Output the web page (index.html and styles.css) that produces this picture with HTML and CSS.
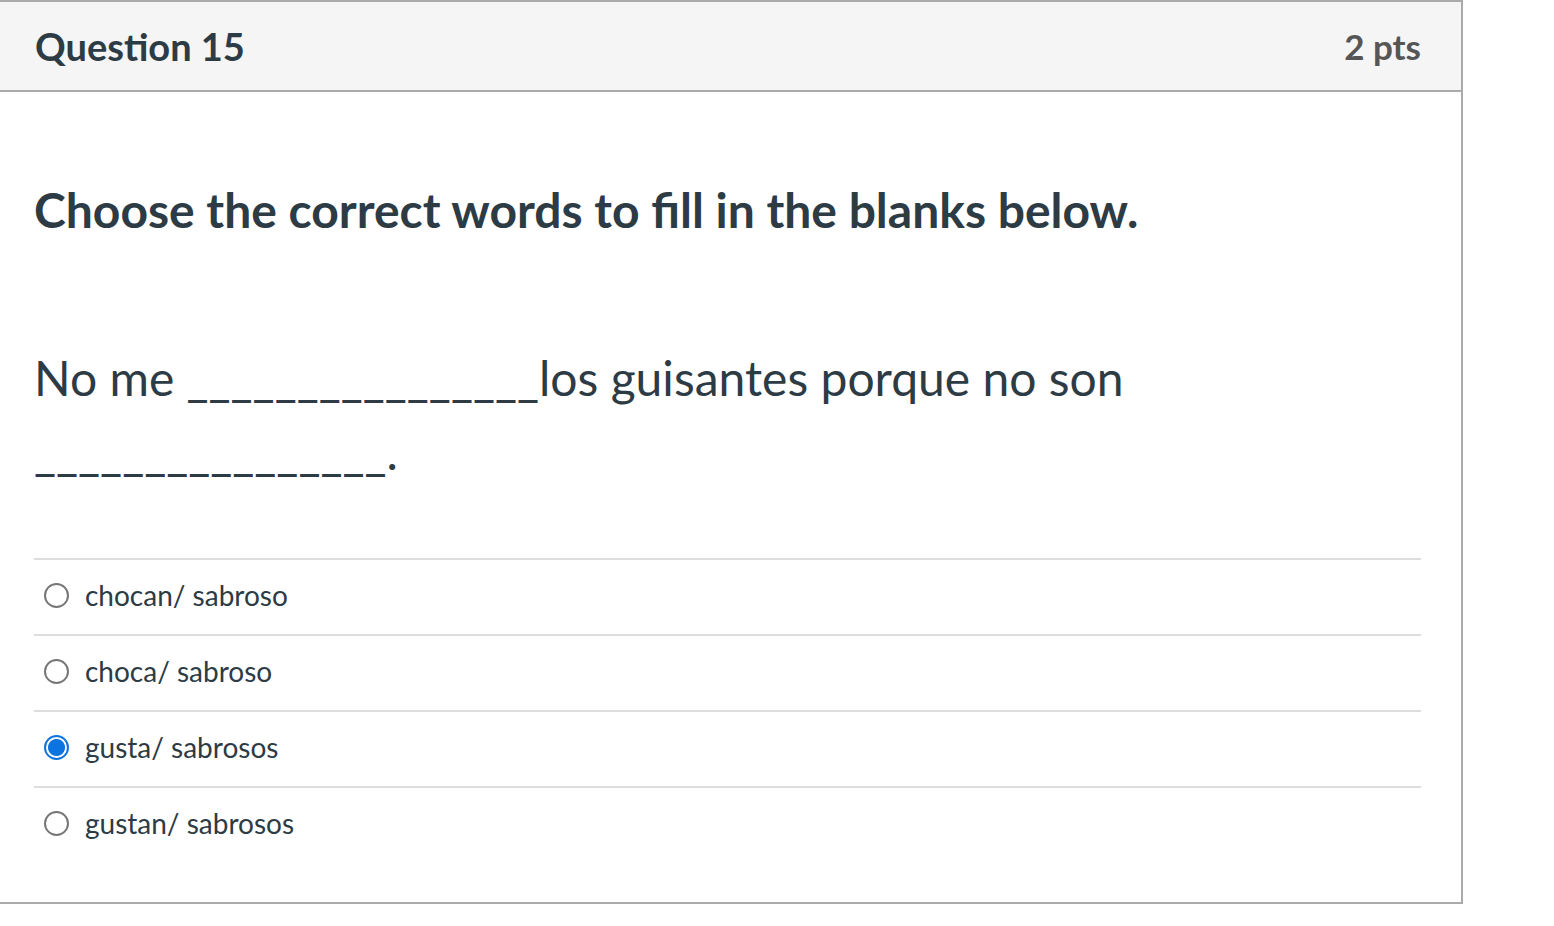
FILE: index.html
```html
<!DOCTYPE html>
<html lang="es">
<head>
<meta charset="utf-8">
<link rel="stylesheet" href="styles.css">
<title>Question 15</title>
</head>
<body>
<div class="question">
  <div class="q-header">
    <span class="q-title">Question 15</span>
    <span class="q-pts">2 pts</span>
  </div>
  <div class="q-body">
    <h3 class="q-heading">Choose the correct words to fill in the blanks below.</h3>
    <p class="q-text">No me ________________los guisantes porque no son ________________.</p>
    <div class="answers">
      <label class="answer"><span class="radio"></span><span class="a-text">chocan/ sabroso</span></label>
      <label class="answer"><span class="radio"></span><span class="a-text">choca/ sabroso</span></label>
      <label class="answer"><span class="radio checked"></span><span class="a-text">gusta/ sabrosos</span></label>
      <label class="answer"><span class="radio"></span><span class="a-text">gustan/ sabrosos</span></label>
    </div>
  </div>
</div>
</body>
</html>
```
FILE: styles.css
```css
html, body {
  margin: 0;
  padding: 0;
  background: #ffffff;
}
body {
  font-family: Lato, "Open Sans", sans-serif;
  color: #2d3b45;
}
.question {
  width: 1461px;
  border-top: 2px solid #aaaaaa;
  border-right: 2px solid #aaaaaa;
  border-bottom: 2px solid #aaaaaa;
  box-sizing: content-box;
}
.q-header {
  display: flex;
  justify-content: space-between;
  align-items: center;
  height: 88px;
  padding: 0 40px 0 35px;
  background: #f5f5f5;
  border-bottom: 2px solid #aaaaaa;
}
.q-title {
  font-weight: 700;
  font-size: 38px;
  color: #2d3b45;
}
.q-pts {
  font-weight: 700;
  font-size: 35px;
  color: #565656;
}
.q-body {
  padding: 0 40px 40px 34px;
}
.q-heading {
  margin: 0;
  padding-top: 86px;
  font-weight: 700;
  font-size: 48px;
  line-height: 64px;
}
.q-text {
  margin: 0;
  padding-top: 99px;
  padding-right: 260px;
  font-size: 48px;
  line-height: 74px;
  font-weight: 400;
}
.answers {
  margin-top: 69px;
}
.answer {
  display: flex;
  align-items: center;
  height: 70px;
  padding-bottom: 4px;
  border-top: 2px solid #dddddd;
  font-size: 28px;
}
.radio {
  width: 21px;
  height: 21px;
  border: 2px solid #767676;
  border-radius: 50%;
  background: #ffffff;
  margin-left: 10px;
  margin-right: 16px;
  box-sizing: content-box;
  flex: none;
}
.radio.checked {
  border-color: #0b74de;
  background: radial-gradient(circle, #0b74de 0 8px, #ffffff 9px);
}
.a-text {
  color: #2d3b45;
}
```
